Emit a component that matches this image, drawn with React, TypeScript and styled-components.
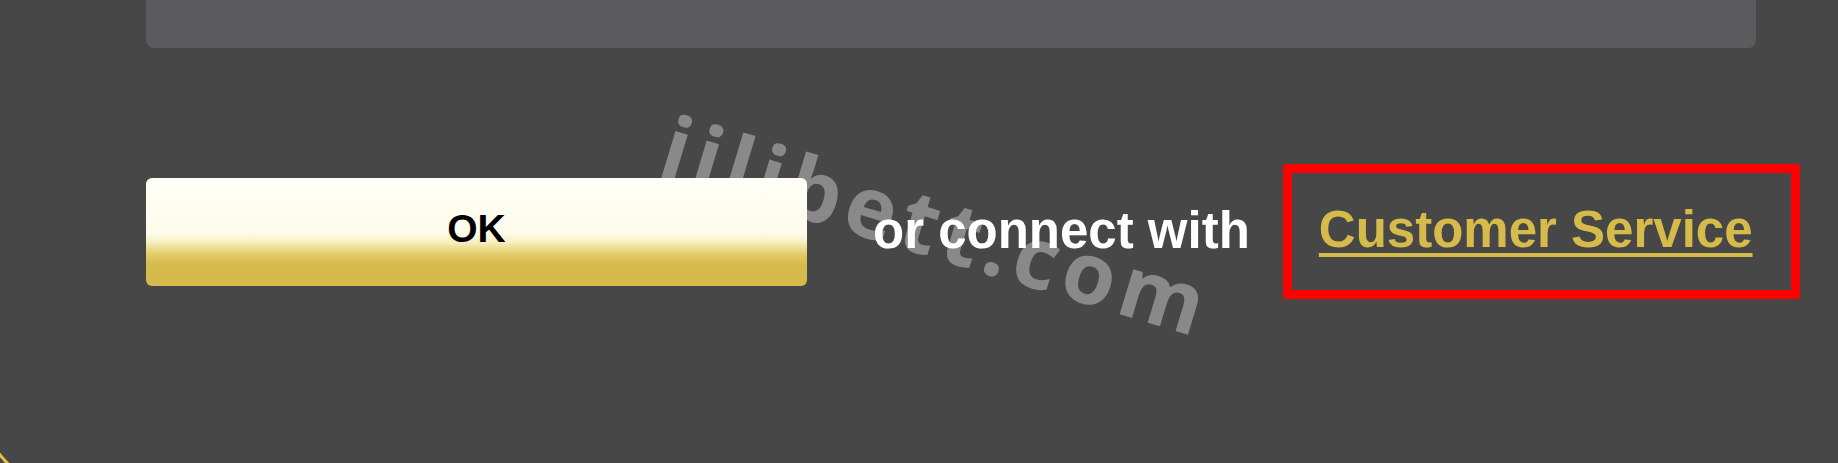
import React from "react";
import styled, { createGlobalStyle } from "styled-components";

const GlobalStyle = createGlobalStyle`
  html, body {
    margin: 0;
    padding: 0;
    background: #474747;
    overflow: hidden;
  }
  * {
    box-sizing: border-box;
  }
`;

const Page = styled.div`
  position: relative;
  width: 1838px;
  height: 463px;
  overflow: hidden;
  padding: 0 82px 0 146px;
  background: #474747;
  font-family: "Liberation Sans", Arial, sans-serif;
`;

const TopPanel = styled.div`
  height: 48px;
  width: 100%;
  background: #5b5b5d;
  border-radius: 0 0 8px 8px;
`;

const ActionRow = styled.div`
  position: relative;
  z-index: 1;
  display: flex;
  align-items: center;
  margin-top: 116px;
  & > * {
    flex-shrink: 0;
  }
`;

const OkButton = styled.button`
  width: 661px;
  height: 108px;
  border: none;
  border-radius: 6px;
  background: linear-gradient(
    to bottom,
    #fffff8 0%,
    #fdfbea 52%,
    #f6edba 60%,
    #e4cd6c 70%,
    #d6ba4b 80%,
    #d4b94b 100%
  );
  color: #000;
  font-family: "Liberation Sans", Arial, sans-serif;
  font-size: 39px;
  font-weight: 700;
  padding: 0 0 6px;
  cursor: pointer;
`;

const ConnectText = styled.span`
  margin-left: 66px;
  color: #ffffff;
  font-size: 51px;
  font-weight: 700;
  white-space: nowrap;
  padding-bottom: 2px;
`;

const HighlightBox = styled.div`
  margin-left: 33px;
  height: 135px;
  border: 9px solid #ff0000;
  border-radius: 3px;
  display: flex;
  align-items: center;
  padding: 0 38px 4px 27px;
`;

const ServiceLink = styled.a`
  color: #d6bb4b;
  font-size: 51px;
  font-weight: 700;
  white-space: nowrap;
  text-decoration: underline;
  text-decoration-thickness: 4px;
  text-underline-offset: 6px;
  cursor: pointer;
`;

const Watermark = styled.span`
  position: absolute;
  left: 682px;
  top: 86px;
  z-index: 0;
  transform: rotate(16.8deg);
  transform-origin: 0 0;
  font-family: "Open Sans", sans-serif;
  font-size: 86px;
  font-weight: 700;
  letter-spacing: 6.5px;
  color: #898989;
  white-space: nowrap;
  pointer-events: none;
`;

const GoldCorner = styled.div`
  position: absolute;
  left: -13px;
  bottom: -17px;
  width: 200px;
  height: 200px;
  border-left: 3px solid #e0c040;
  border-bottom: 3px solid #e0c040;
  border-bottom-left-radius: 60px;
  pointer-events: none;
`;

export default function App() {
  return (
    <>
      <GlobalStyle />
      <Page>
        <Watermark>jilibett.com</Watermark>
        <TopPanel />
        <ActionRow>
          <OkButton>OK</OkButton>
          <ConnectText>or connect with</ConnectText>
          <HighlightBox>
            <ServiceLink>Customer Service</ServiceLink>
          </HighlightBox>
        </ActionRow>
        <GoldCorner />
      </Page>
    </>
  );
}
